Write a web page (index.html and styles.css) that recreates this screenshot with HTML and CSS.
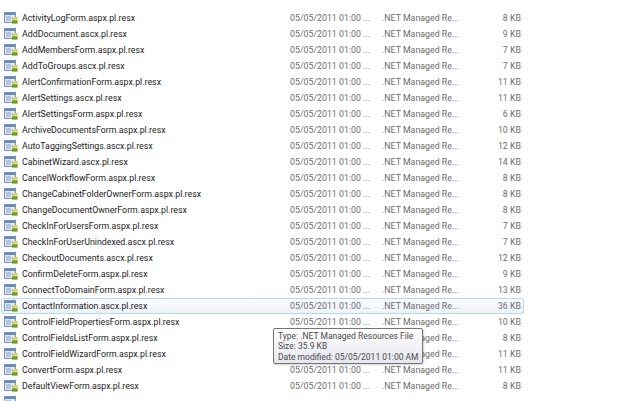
FILE: index.html
```html
<!DOCTYPE html>
<html>
<head>
<meta charset="utf-8">
<link rel="stylesheet" href="styles.css">
</head>
<body>
<svg class="defs" width="0" height="0">
  <defs>
    <symbol id="resx" viewBox="0 0 14 12">
      <rect x="0.5" y="0.5" width="11" height="10" fill="#e3eaf4" stroke="#7f93b0"/>
      <rect x="1" y="1" width="10" height="2" fill="#5a8fd2"/>
      <rect x="2" y="4" width="5" height="5" fill="#b3c6e0"/>
      <rect x="8" y="5" width="5.5" height="6.5" fill="#e6c84e"/>
      <rect x="8" y="8.5" width="5.5" height="3" fill="#5aa23c"/>
      <rect x="10" y="5" width="3.5" height="3" fill="#cfdc7a"/>
    </symbol>
  </defs>
</svg>
<div class="list">
  <div class="row"><div class="name"><svg class="ico" viewBox="0 0 14 12"><use href="#resx" width="14" height="12"/></svg>ActivityLogForm.aspx.pl.resx</div><div class="date">05/05/2011 01:00 ...</div><div class="type">.NET Managed Re...</div><div class="size">8 KB</div></div>
  <div class="row"><div class="name"><svg class="ico" viewBox="0 0 14 12"><use href="#resx" width="14" height="12"/></svg>AddDocument.ascx.pl.resx</div><div class="date">05/05/2011 01:00 ...</div><div class="type">.NET Managed Re...</div><div class="size">9 KB</div></div>
  <div class="row"><div class="name"><svg class="ico" viewBox="0 0 14 12"><use href="#resx" width="14" height="12"/></svg>AddMembersForm.aspx.pl.resx</div><div class="date">05/05/2011 01:00 ...</div><div class="type">.NET Managed Re...</div><div class="size">7 KB</div></div>
  <div class="row"><div class="name"><svg class="ico" viewBox="0 0 14 12"><use href="#resx" width="14" height="12"/></svg>AddToGroups.ascx.pl.resx</div><div class="date">05/05/2011 01:00 ...</div><div class="type">.NET Managed Re...</div><div class="size">7 KB</div></div>
  <div class="row"><div class="name"><svg class="ico" viewBox="0 0 14 12"><use href="#resx" width="14" height="12"/></svg>AlertConfirmationForm.aspx.pl.resx</div><div class="date">05/05/2011 01:00 ...</div><div class="type">.NET Managed Re...</div><div class="size">11 KB</div></div>
  <div class="row"><div class="name"><svg class="ico" viewBox="0 0 14 12"><use href="#resx" width="14" height="12"/></svg>AlertSettings.ascx.pl.resx</div><div class="date">05/05/2011 01:00 ...</div><div class="type">.NET Managed Re...</div><div class="size">11 KB</div></div>
  <div class="row"><div class="name"><svg class="ico" viewBox="0 0 14 12"><use href="#resx" width="14" height="12"/></svg>AlertSettingsForm.aspx.pl.resx</div><div class="date">05/05/2011 01:00 ...</div><div class="type">.NET Managed Re...</div><div class="size">6 KB</div></div>
  <div class="row"><div class="name"><svg class="ico" viewBox="0 0 14 12"><use href="#resx" width="14" height="12"/></svg>ArchiveDocumentsForm.aspx.pl.resx</div><div class="date">05/05/2011 01:00 ...</div><div class="type">.NET Managed Re...</div><div class="size">10 KB</div></div>
  <div class="row"><div class="name"><svg class="ico" viewBox="0 0 14 12"><use href="#resx" width="14" height="12"/></svg>AutoTaggingSettings.ascx.pl.resx</div><div class="date">05/05/2011 01:00 ...</div><div class="type">.NET Managed Re...</div><div class="size">12 KB</div></div>
  <div class="row"><div class="name"><svg class="ico" viewBox="0 0 14 12"><use href="#resx" width="14" height="12"/></svg>CabinetWizard.ascx.pl.resx</div><div class="date">05/05/2011 01:00 ...</div><div class="type">.NET Managed Re...</div><div class="size">14 KB</div></div>
  <div class="row"><div class="name"><svg class="ico" viewBox="0 0 14 12"><use href="#resx" width="14" height="12"/></svg>CancelWorkflowForm.aspx.pl.resx</div><div class="date">05/05/2011 01:00 ...</div><div class="type">.NET Managed Re...</div><div class="size">8 KB</div></div>
  <div class="row"><div class="name"><svg class="ico" viewBox="0 0 14 12"><use href="#resx" width="14" height="12"/></svg>ChangeCabinetFolderOwnerForm.aspx.pl.resx</div><div class="date">05/05/2011 01:00 ...</div><div class="type">.NET Managed Re...</div><div class="size">8 KB</div></div>
  <div class="row"><div class="name"><svg class="ico" viewBox="0 0 14 12"><use href="#resx" width="14" height="12"/></svg>ChangeDocumentOwnerForm.aspx.pl.resx</div><div class="date">05/05/2011 01:00 ...</div><div class="type">.NET Managed Re...</div><div class="size">8 KB</div></div>
  <div class="row"><div class="name"><svg class="ico" viewBox="0 0 14 12"><use href="#resx" width="14" height="12"/></svg>CheckInForUsersForm.aspx.pl.resx</div><div class="date">05/05/2011 01:00 ...</div><div class="type">.NET Managed Re...</div><div class="size">7 KB</div></div>
  <div class="row"><div class="name"><svg class="ico" viewBox="0 0 14 12"><use href="#resx" width="14" height="12"/></svg>CheckInForUserUnindexed.ascx.pl.resx</div><div class="date">05/05/2011 01:00 ...</div><div class="type">.NET Managed Re...</div><div class="size">7 KB</div></div>
  <div class="row"><div class="name"><svg class="ico" viewBox="0 0 14 12"><use href="#resx" width="14" height="12"/></svg>CheckoutDocuments.ascx.pl.resx</div><div class="date">05/05/2011 01:00 ...</div><div class="type">.NET Managed Re...</div><div class="size">12 KB</div></div>
  <div class="row"><div class="name"><svg class="ico" viewBox="0 0 14 12"><use href="#resx" width="14" height="12"/></svg>ConfirmDeleteForm.aspx.pl.resx</div><div class="date">05/05/2011 01:00 ...</div><div class="type">.NET Managed Re...</div><div class="size">9 KB</div></div>
  <div class="row"><div class="name"><svg class="ico" viewBox="0 0 14 12"><use href="#resx" width="14" height="12"/></svg>ConnectToDomainForm.aspx.pl.resx</div><div class="date">05/05/2011 01:00 ...</div><div class="type">.NET Managed Re...</div><div class="size">13 KB</div></div>
  <div class="row hover"><div class="name"><svg class="ico" viewBox="0 0 14 12"><use href="#resx" width="14" height="12"/></svg>ContactInformation.ascx.pl.resx</div><div class="date">05/05/2011 01:00 ...</div><div class="type">.NET Managed Re...</div><div class="size">36 KB</div></div>
  <div class="row"><div class="name"><svg class="ico" viewBox="0 0 14 12"><use href="#resx" width="14" height="12"/></svg>ControlFieldPropertiesForm.aspx.pl.resx</div><div class="date">05/05/2011 01:00 ...</div><div class="type">.NET Managed Re...</div><div class="size">10 KB</div></div>
  <div class="row"><div class="name"><svg class="ico" viewBox="0 0 14 12"><use href="#resx" width="14" height="12"/></svg>ControlFieldsListForm.aspx.pl.resx</div><div class="date">05/05/2011 01:00 ...</div><div class="type">.NET Managed Re...</div><div class="size">8 KB</div></div>
  <div class="row"><div class="name"><svg class="ico" viewBox="0 0 14 12"><use href="#resx" width="14" height="12"/></svg>ControlFieldWizardForm.aspx.pl.resx</div><div class="date">05/05/2011 01:00 ...</div><div class="type">.NET Managed Re...</div><div class="size">11 KB</div></div>
  <div class="row"><div class="name"><svg class="ico" viewBox="0 0 14 12"><use href="#resx" width="14" height="12"/></svg>ConvertForm.aspx.pl.resx</div><div class="date">05/05/2011 01:00 ...</div><div class="type">.NET Managed Re...</div><div class="size">11 KB</div></div>
  <div class="row"><div class="name"><svg class="ico" viewBox="0 0 14 12"><use href="#resx" width="14" height="12"/></svg>DefaultViewForm.aspx.pl.resx</div><div class="date">05/05/2011 01:00 ...</div><div class="type">.NET Managed Re...</div><div class="size">8 KB</div></div>
  <div class="row"><div class="name"><svg class="ico" viewBox="0 0 14 12"><use href="#resx" width="14" height="12"/></svg></div></div>
</div>
<div class="tooltip">
  <div>Type: .NET Managed Resources File</div>
  <div>Size: 35.9 KB</div>
  <div>Date modified: 05/05/2011 01:00 AM</div>
</div>
</body>
</html>
```

FILE: styles.css
```css
html, body {
  margin: 0;
  padding: 0;
  background: #ffffff;
  width: 628px;
  height: 401px;
  overflow: hidden;
}
body {
  font-family: Roboto, "Liberation Sans", sans-serif;
  font-size: 8.8px;
  color: #1b1b1b;
  position: relative;
}
.defs {
  position: absolute;
  width: 0;
  height: 0;
}
.list {
  padding-top: 10px;
  display: flex;
  flex-direction: column;
}
.row {
  box-sizing: border-box;
  margin-left: 1px;
  width: 523px;
  height: 16px;
  border: 1px solid transparent;
  border-radius: 2px;
  display: grid;
  grid-template-columns: 288px 92px 88px 51px;
  align-items: center;
  white-space: nowrap;
}
.row.hover {
  border-color: #b8d6fb;
  background: linear-gradient(#fbfcfe, #eef4fc);
}
.name {
  display: flex;
  align-items: center;
  gap: 4px;
  padding-left: 2px;
}
.ico {
  width: 14px;
  height: 12px;
  flex: none;
}
.date, .type, .size {
  color: #6d6d6d;
}
.size {
  text-align: right;
}
.tooltip {
  position: absolute;
  z-index: 2;
  left: 273px;
  top: 328px;
  width: 150px;
  height: 36px;
  box-sizing: border-box;
  border: 1px solid #767676;
  border-radius: 2px;
  background: linear-gradient(#ffffff, #e6e7ef);
  box-shadow: 1px 1px 2px rgba(0,0,0,0.18);
  padding: 2px 0 0 4px;
  font-size: 8.5px;
  line-height: 10.3px;
  color: #4a4a4a;
  white-space: nowrap;
}
```
